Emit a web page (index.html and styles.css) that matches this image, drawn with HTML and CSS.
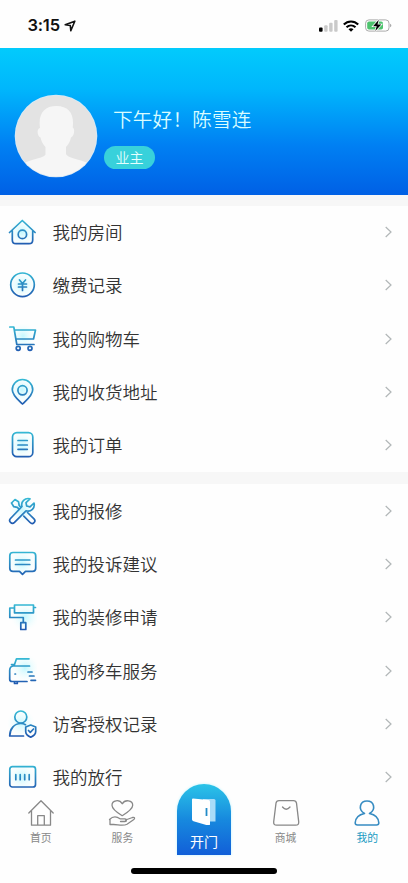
FILE: index.html
```html
<!DOCTYPE html>
<html lang="zh-CN">
<head>
<meta charset="UTF-8">
<meta name="viewport" content="width=device-width, initial-scale=1">
<title>我的</title>
<link rel="stylesheet" href="styles.css">
</head>
<body>
<svg class="defs" aria-hidden="true">
  <defs>
    <linearGradient id="line" gradientUnits="userSpaceOnUse" x1="0" y1="2" x2="0" y2="28"><stop offset="0" stop-color="#35bad5"/><stop offset="1" stop-color="#2159b0"/></linearGradient>
    <radialGradient id="glow"><stop offset="0" stop-color="#c4f8ff"/><stop offset="1" stop-color="#effeff" stop-opacity="0"/></radialGradient>
    <symbol id="chevron" viewBox="0 0 8 12"><path d="M1.2 1 6.5 6l-5.3 5"/></symbol>
  </defs>
</svg>
<div class="app">
  <div class="status">
    <div class="clock">3:15
      <svg width="12" height="12" viewBox="0 0 12 12"><path d="M1.200 4.800 10.800 1.200 6.800 10.700 6.300 5.500Z" fill="none" stroke="#111" stroke-width="1.600" stroke-linejoin="round"/></svg>
    </div>
    <div class="signals">
      <svg width="19" height="12" viewBox="0 0 19 12"><rect x="0" y="7.500" width="3.600" height="4.300" rx="1" fill="#000"/><g fill="#c9c9c9"><rect x="5.200" y="5.300" width="3.400" height="6.500" rx="1"/><rect x="10.200" y="2.800" width="3.400" height="9" rx="1"/><rect x="15.200" y="0" width="3.400" height="11.800" rx="1"/></g></svg>
      <svg width="16" height="12" viewBox="0 0 16 12"><g fill="none" stroke="#000" stroke-width="2.100"><path d="M.8 4.500c4.100-4.100 10.300-4.100 14.400 0"/><path d="M3.500 7.300c2.600-2.500 6.400-2.500 9 0"/></g><path d="M5.500 9.200c1.500-1.200 3.500-1.200 5 0L8 11.800Z"/></svg>
      <svg width="27" height="13" viewBox="0 0 27 13"><rect x=".6" y=".9" width="23.400" height="11.200" rx="3.300" fill="#fff" stroke="#aaa"/><rect x="2.200" y="2.500" width="15.800" height="8" rx="1.800" fill="#4dc36e"/><path d="M25.200 4.700c1.500.6 1.500 3 0 3.600Z" fill="#999"/><path d="M13.800.8 8 7.300h3.700L10.300 12l6-6.600h-3.800Z" fill="#000" stroke="#fff" stroke-width="1.500" paint-order="stroke"/></svg>
    </div>
  </div>

  <header class="profile">
    <svg class="avatar" width="84" height="84" viewBox="0 0 84 84">
      <clipPath id="face"><circle cx="42" cy="42" r="40.500"/></clipPath>
      <circle cx="42" cy="42" r="41.300" fill="#d5eaf8"/>
      <g clip-path="url(#face)"><path fill="#e3e3e3" d="M0 0h84v84H0z"/><path fill="#f6f6f6" d="M26 34c-2-14 4-22 16.500-22S60.500 20 58.700 33.500c2.500 1 1.600 9-1.700 10-.8 4-2.500 7-5 9.500V60c1 4 13 5 22 9l5 15H5l5-15c8-4 20-5 21.500-8.500v-7.500c-2.500-2.500-4.200-5.500-5-9.500-3.300-1-4.200-8.500-.5-9.500Z"/></g>
    </svg>
    <div class="identity">
      <h1>下午好！陈雪连</h1>
      <span class="role">业主</span>
    </div>
  </header>

  <main>
    <ul class="menu">
      <li><svg class="icon" viewBox="0 0 30 30"><circle class="halo" cx="15" cy="15" r="14"/><path d="M2.500 15.500 15.300 3.500 28.100 15.500M5.300 13.500V23q0 3.700 3.700 3.700h13q3.700 0 3.700-3.700v-9.500"/><circle cx="15.400" cy="17.400" r="4.200"/></svg><span>我的房间</span><svg class="go"><use href="#chevron"/></svg></li>
      <li><svg class="icon" viewBox="0 0 30 30"><circle class="halo" cx="15" cy="15" r="14"/><circle cx="15.500" cy="14.800" r="11.800"/><path d="m12.500 10 3 3.500 3-3.500M11.500 14h8M11.500 17h8M15.500 14v6.500"/></svg><span>缴费记录</span><svg class="go"><use href="#chevron"/></svg></li>
      <li><svg class="icon" viewBox="0 0 30 30"><circle class="halo" cx="16" cy="12" r="13"/><path d="M2.800 3h4l3 17.500H27M7.500 6h21L26.500 15H9"/><circle cx="11.200" cy="24.300" r="2"/><circle cx="23" cy="24.300" r="2"/></svg><span>我的购物车</span><svg class="go"><use href="#chevron"/></svg></li>
      <li><svg class="icon" viewBox="0 0 30 30"><circle class="halo" cx="15" cy="13" r="14"/><path d="M15.500 27C12 23.500 5.300 18.500 5.300 12.700a10.200 10.200 0 0 1 20.400 0c0 5.800-6.700 10.800-10.200 14.300Z"/><circle cx="15.500" cy="13.300" r="4.600"/></svg><span>我的收货地址</span><svg class="go"><use href="#chevron"/></svg></li>
      <li><svg class="icon" viewBox="0 0 30 30"><circle class="halo" cx="15" cy="15" r="14"/><rect x="5.500" y="2.700" width="20.300" height="24" rx="4.300"/><path d="M11 10.500h9.300M11 15h9.300M11 19.300h9.300"/></svg><span>我的订单</span><svg class="go"><use href="#chevron"/></svg></li>
    </ul>
    <ul class="menu">
      <li><svg class="icon" viewBox="0 0 30 30"><circle class="halo" cx="15" cy="14" r="14"/><path d="M23 2.800c-5-1.300-9.500 2.700-8 7.700L3.500 22.500c-2.500 2.700 1.300 6.500 4 3.900L19 14.800c5 1.500 9.300-2.800 8-7.800l-4 3.800-3.300-.8-.7-3.300ZM4.500 7 8 3.500l3.500 2.200.7 3.800 1.500 1.700M4.500 7l2.300 3.700 3.500.7 1.500 1.500M20.500 16.500l6.500 6.300c2.500 2.700-1.200 6.400-3.900 3.700l-6.300-6.400"/></svg><span>我的报修</span><svg class="go"><use href="#chevron"/></svg></li>
      <li><svg class="icon" viewBox="0 0 30 30"><circle class="halo" cx="15" cy="14" r="14"/><path d="M6 3.500h19.500q3.200 0 3.200 3.200v12.500q0 3.200-3.200 3.200h-7l-3 3-3-3H6q-3.200 0-3.200-3.200V6.700Q2.800 3.500 6 3.500ZM8.500 11h14.300M8.500 15.500h14.300"/></svg><span>我的投诉建议</span><svg class="go"><use href="#chevron"/></svg></li>
      <li><svg class="icon" viewBox="0 0 30 30"><circle class="halo" cx="18" cy="15" r="14"/><path d="M7.500 3h19v7.800h-19ZM26.500 5.500h2M7.500 6H2.800v9.500h13.500v5.200M13.800 20.700h5v6.800h-5Z"/></svg><span>我的装修申请</span><svg class="go"><use href="#chevron"/></svg></li>
      <li><svg class="icon" viewBox="0 0 30 30"><circle class="halo" cx="18" cy="12" r="14"/><path d="M22 2.800H9.500L7 10M4.500 8.500H7M22.500 10H6q-3.300.5-3.300 4.500v8.700q0 2.300 2.300 2.300h15M7.500 26v1.500h2.800V26M21 16h4M22.500 20h4.500M24 24.300h4.500M8 18h.5"/></svg><span>我的移车服务</span><svg class="go"><use href="#chevron"/></svg></li>
      <li><svg class="icon" viewBox="0 0 30 30"><circle class="halo" cx="14" cy="14" r="14"/><circle cx="13.800" cy="8" r="6"/><path d="M16.500 27H2.700c0-7 4.500-12.500 11-12.500 2 0 3.500.4 4.800 1.200M23.700 16l5 2v4.500q0 3.500-5 5.700-5-2.200-5-5.700V18Zm-2.200 5.500 1.800 1.800 3.200-3.300"/></svg><span>访客授权记录</span><svg class="go"><use href="#chevron"/></svg></li>
      <li><svg class="icon" viewBox="0 0 30 30"><circle class="halo" cx="15" cy="15" r="14"/><rect x="2.800" y="4.700" width="25.700" height="20.300" rx="2.500"/><path d="M8.800 12.500v5.200M13.200 12.500v5.200M17.700 12.500v5.200M22.200 12.500v5.200"/></svg><span>我的放行</span><svg class="go"><use href="#chevron"/></svg></li>
    </ul>
  </main>

  <nav class="tabs">
    <a class="tab"><svg viewBox="0 0 28 28"><path d="M1.800 14 14 1.700 26.200 14M4.500 11.500v14.700h19V11.500M10.700 26v-9.300h6.600V26"/></svg><span>首页</span></a>
    <a class="tab"><svg viewBox="0 0 28 28"><path d="M14.200 16.700C9 13.500 4 9.500 4 6.200c0-5 7.500-6.300 10.200-1.400C17 0 24.700 1.200 24.700 6.200c0 3.300-5.300 7.300-10.500 10.500ZM1.500 20.500c4-4 8-2.500 10.500-.7h5c2 0 2 2.700 0 2.700h-4.500M17.500 21l7-2.500c2.300-.6 2.800 1 1 2.200l-6.500 4.500c-4 2.300-9 .3-13.500.3H2v-5"/></svg><span>服务</span></a>
    <a class="open"><svg viewBox="0 0 28 28"><path d="M13 2h11q1.500 0 1.500 1.500v21H13Z" fill="#a9dcf8"/><path d="M3 1.500 18.500 3q1.500.2 1.500 1.700V27q0 2-2 1.500L3.500 24.200Q2 23.800 2 22.500v-20Q2 1.500 3 1.500Z" fill="#fff"/><path d="M16.500 11v8" stroke="#238bc8" stroke-width="1.800"/></svg><span>开门</span></a>
    <a class="tab"><svg viewBox="0 0 28 28"><path d="M7 1.700h14.500q2.600 0 3 2.500l2.200 18.500q.4 3.500-3 3.500h-19q-3.400 0-3-3.500L4 4.200q.4-2.500 3-2.500ZM10.500 8q3.700 4.500 7.500 0"/></svg><span>商城</span></a>
    <a class="tab active"><svg viewBox="0 0 28 28"><path d="M11.500 14.500C4.500 10.500 7 2 14 2s9.500 8.500 2.500 12.500c5 1 9 4 9.300 9.300q.1 2.200-2.300 2.200h-19q-2.400 0-2.300-2.200c.3-5.300 4.300-8.300 9.300-9.300Z"/></svg><span>我的</span></a>
  </nav>
  <div class="home"></div>
</div>
</body>
</html>
```
FILE: styles.css
```css
* { box-sizing: border-box; }
body { margin: 0; background: #fefefe; color: #333; font-family: "Noto Sans CJK SC", sans-serif; }
h1, ul { margin: 0; padding: 0; font-weight: 400; }
svg { display: block; flex: none; }
.defs { position: absolute; width: 0; height: 0; }
.app { width: 408px; height: 883px; overflow: hidden; display: flex; flex-direction: column; background: #fefefe; }

.status { height: 48px; flex: none; display: flex; justify-content: space-between; padding: 15px 16px 0 27.5px; }
.clock { display: flex; align-items: center; gap: 4px; height: 21px; font: 600 16.5px/21px Inter, sans-serif; color: #111; letter-spacing: -.2px; }
.signals { display: flex; align-items: center; gap: 6px; height: 21px; }
.signals svg:first-child { margin-right: -1px; }

.profile { height: 147px; flex: none; display: flex; background: linear-gradient(#02cbfc, #00b6fc 28%, #0080f3 66%, #0060e5); padding: 46px 0 0 14px; }
.identity { display: flex; flex-direction: column; align-items: flex-start; padding: 10px 0 0 6px; }
.identity h1 { font-size: 19.6px; line-height: 30px; margin-left: 9px; color: #d9fcff; font-weight: 350; letter-spacing: .2px; }
.role { width: 51px; height: 23px; margin-top: 12px; border-radius: 12px; background: #38d1db; color: #e5ffff; font-size: 14px; line-height: 22px; text-align: center; font-weight: 350; }

main { height: 589px; flex: none; }
.menu { list-style: none; border-top: 11px solid #f7f7f7; }
.menu + .menu { border-top-width: 12px; }
.menu li { height: 53.3px; display: flex; align-items: center; padding: 0 15px 0 7px; }
.menu span { flex: 1; margin: -1px 0 0 15.5px; font-size: 17.5px; line-height: 26px; font-weight: 350; }
.icon { width: 30px; height: 30px; margin-top: -1px; fill: none; stroke: url(#line); stroke-width: 1.7; stroke-linejoin: round; stroke-linecap: round; }
.icon .halo { fill: url(#glow); stroke: none; }
.go { width: 9px; height: 12px; margin-top: -1px; fill: none; stroke: #b2b7b8; stroke-width: 1.2; }

.tabs { height: 65px; flex: none; display: grid; grid-template-columns: repeat(5, 1fr); align-items: end; }
.tab { display: flex; flex-direction: column; align-items: center; height: 57px; color: #888; }
.tab svg { width: 28px; height: 28px; margin-top: 1px; fill: none; stroke: currentColor; stroke-width: 1.3; stroke-linejoin: round; stroke-linecap: round; }
.tab span { font-size: 10.8px; line-height: 16px; margin-top: 2px; }
.active { color: #199ac2; }
.active svg { stroke: #378cc2; stroke-width: 1.6; }
.open { justify-self: center; width: 54px; height: 71px; display: flex; flex-direction: column; align-items: center; color: #fff; border-radius: 27px 27px 0 0; background: linear-gradient(#2bc4e8, #1789de 50%, #125fd8); box-shadow: 0 0 3px #bdf4ff; }
.open svg { width: 28px; height: 28px; margin-top: 13px; }
.open span { font-size: 14px; line-height: 20px; margin-top: 6px; }
.home { width: 146px; height: 6px; flex: none; margin: 19px auto 0; border-radius: 3px; background: #000; }
```
